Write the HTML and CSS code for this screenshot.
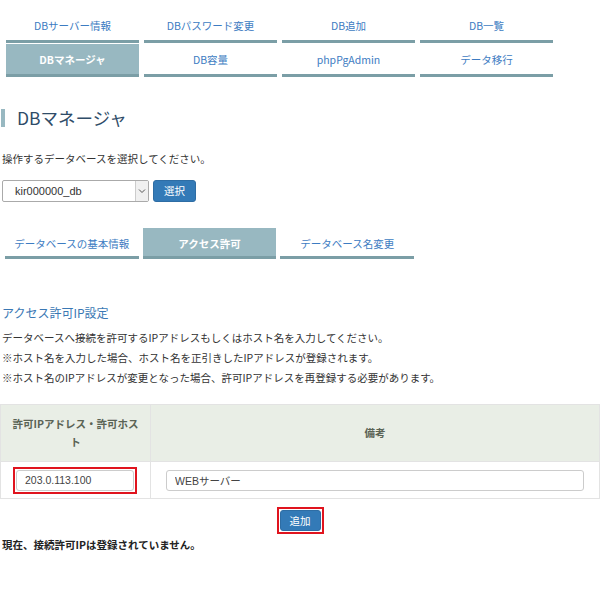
FILE: index.html
```html
<!DOCTYPE html>
<html lang="ja">
<head>
    <meta charset="UTF-8">
    <title>DBマネージャ</title>
    <link rel="stylesheet" href="styles.css">
</head>
<body>
    <div class="page">
        <ul class="menu">
            <li><a href="#">DBサーバー情報</a></li>
            <li><a href="#">DBパスワード変更</a></li>
            <li><a href="#">DB追加</a></li>
            <li><a href="#">DB一覧</a></li>
            <li class="active"><a href="#">DBマネージャ</a></li>
            <li><a href="#">DB容量</a></li>
            <li><a href="#">phpPgAdmin</a></li>
            <li><a href="#">データ移行</a></li>
        </ul>

        <h1 class="page-title">DBマネージャ</h1>

        <p class="lead">操作するデータベースを選択してください。</p>
        <form class="db-select">
            <div class="select-box">
                <span>kir000000_db</span>
                <span class="select-arrow">
                    <svg width="8" height="6" viewBox="0 0 8 6"><path d="M1 1.5 L4 4.5 L7 1.5" fill="none" stroke="#555" stroke-width="1"/></svg>
                </span>
            </div>
            <button type="button" class="btn">選択</button>
        </form>

        <ul class="subtabs">
            <li><a href="#">データベースの基本情報</a></li>
            <li class="active"><a href="#">アクセス許可</a></li>
            <li><a href="#">データベース名変更</a></li>
        </ul>

        <h4 class="section-title">アクセス許可IP設定</h4>
        <p class="note">データベースへ接続を許可するIPアドレスもしくはホスト名を入力してください。</p>
        <p class="note">※ホスト名を入力した場合、ホスト名を正引きしたIPアドレスが登録されます。</p>
        <p class="note">※ホスト名のIPアドレスが変更となった場合、許可IPアドレスを再登録する必要があります。</p>

        <table class="ip-table">
            <tr>
                <th class="col-ip">許可IPアドレス・許可ホスト</th>
                <th>備考</th>
            </tr>
            <tr>
                <td class="col-ip">
                    <div class="mark"><input type="text" value="203.0.113.100"></div>
                </td>
                <td><input type="text" class="wide" value="WEBサーバー"></td>
            </tr>
        </table>

        <div class="actions">
            <div class="mark"><button type="button" class="btn">追加</button></div>
        </div>

        <p class="status">現在、接続許可IPは登録されていません。</p>
    </div>
</body>
</html>
```

FILE: styles.css
```css
body {
    margin: 0;
    background: #fff;
    font-family: "Noto Sans CJK JP", sans-serif;
    font-size: 10.5px;
    color: #333;
}

.page {
    padding: 0 2px;
}

a {
    color: #3d7cc2;
    text-decoration: none;
}

/* top menu */
.menu {
    list-style: none;
    margin: 0 0 0 4px;
    padding: 10px 0 0;
    width: 547px;
    display: grid;
    grid-template-columns: repeat(4, 1fr);
    column-gap: 5px;
    row-gap: 1px;
}

.menu li,
.subtabs li {
    border-bottom: 3px solid #7b9ea6;
}

.menu a,
.subtabs a {
    display: block;
    height: 30px;
    line-height: 32px;
    text-align: center;
}

.menu li.active,
.subtabs li.active {
    background-color: #98b8c1;
}

.menu li.active a,
.subtabs li.active a {
    color: #fff;
    font-weight: bold;
}

/* title */
.page-title {
    margin: 32px 0 0 -1px;
    padding-left: 12px;
    border-left: 4px solid #98b8c1;
    font-size: 17.5px;
    font-weight: normal;
    line-height: 18px;
    height: 18px;
    color: #2f4c68;
}

.lead {
    margin: 24px 0 0;
    line-height: 16px;
}

.db-select {
    margin-top: 13px;
    display: flex;
    align-items: center;
    gap: 4px;
}

.select-box {
    width: 147px;
    height: 22px;
    box-sizing: border-box;
    border: 1px solid #aaa;
    border-radius: 2px;
    display: flex;
    align-items: center;
    justify-content: space-between;
    padding-left: 12px;
    font-family: "Liberation Sans", sans-serif;
    font-size: 11px;
    color: #333;
}

.select-arrow {
    width: 12px;
    height: 20px;
    border-left: 1px solid #ccc;
    background: #f0f0f0;
    display: flex;
    align-items: center;
    justify-content: center;
}

.btn {
    font-family: "Noto Sans CJK JP", sans-serif;
    font-size: 10.5px;
    color: #fff;
    background-color: #337ab7;
    border: 1px solid #2e6da4;
    border-radius: 3px;
    height: 22px;
    padding: 0 10px;
    line-height: 18px;
}

/* sub tabs */
.subtabs {
    list-style: none;
    margin: 26px 0 0 3px;
    padding: 0;
    width: 409px;
    display: grid;
    grid-template-columns: repeat(3, 1fr);
    column-gap: 4px;
}

.subtabs a {
    height: 28px;
    line-height: 31px;
}

/* access section */
.section-title {
    margin: 46px 0 0;
    font-size: 12px;
    font-weight: normal;
    line-height: 16px;
    color: #3a78b4;
}

.note {
    margin: 9px 0 0;
    line-height: 16px;
}

.note + .note {
    margin-top: 4px;
}

.ip-table {
    margin: 18px 0 0 -2px;
    width: 600px;
    border-collapse: collapse;
    border: 1px solid #e3e3e3;
}

.ip-table th,
.ip-table td {
    border: 1px solid #e3e3e3;
}

.ip-table th {
    background-color: #e9eee6;
    color: #5a6355;
    font-weight: bold;
    height: 56px;
    padding: 0 10px;
    line-height: 18px;
    text-align: center;
}

.ip-table .col-ip {
    width: 129px;
}

.ip-table td {
    height: 36px;
    padding: 0 15px;
}

.ip-table td.col-ip {
    padding: 0 0 0 12px;
}

.mark {
    display: inline-block;
    border: 2px solid #e0141e;
    padding: 1px;
}

.ip-table input {
    font-family: "Liberation Sans", "Noto Sans CJK JP", sans-serif;
    font-size: 10.5px;
    color: #444;
    height: 21px;
    box-sizing: border-box;
    border: 1px solid #ccc;
    border-radius: 3px;
    padding: 0 8px;
    width: 118px;
    display: block;
}

.ip-table input.wide {
    width: 100%;
}

.actions {
    margin-top: 8px;
    display: flex;
    justify-content: center;
}

.actions .btn {
    display: block;
    height: 21px;
    padding: 0 9px;
}

.status {
    margin: 3px 0 0;
    font-weight: bold;
    color: #222;
    line-height: 16px;
}
```
